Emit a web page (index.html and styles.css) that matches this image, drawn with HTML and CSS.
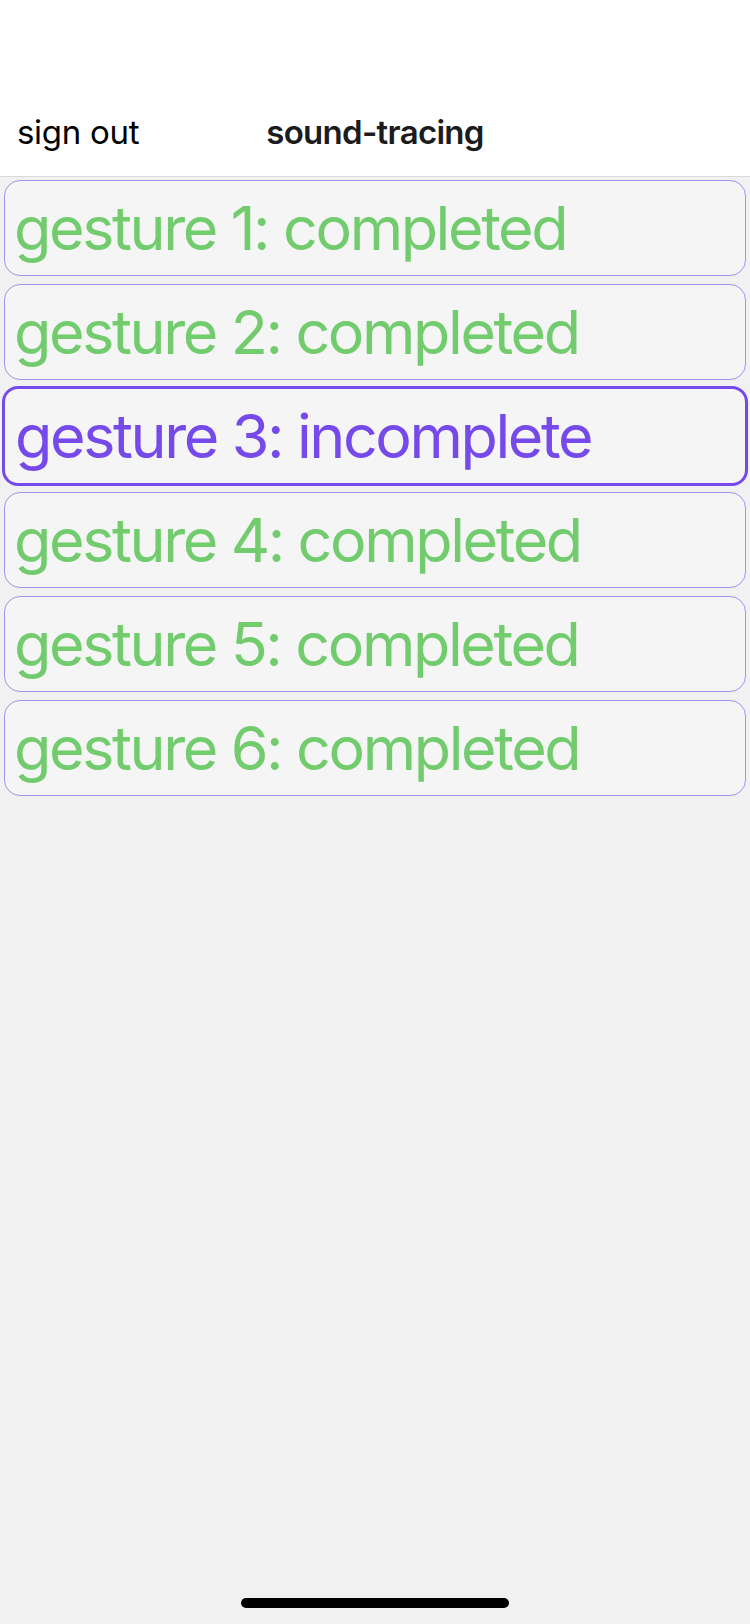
FILE: index.html
```html
<!DOCTYPE html>
<html>
<head>
<meta charset="utf-8">
<link rel="stylesheet" href="styles.css">
</head>
<body>
<div class="screen">
  <header class="topbar">
    <div class="status"></div>
    <nav class="nav">
      <span class="nav-left">sign out</span>
      <span class="nav-title">sound-tracing</span>
      <span class="nav-right"></span>
    </nav>
  </header>
  <main class="list">
    <div class="card done">gesture 1: completed</div>
    <div class="card done">gesture 2: completed</div>
    <div class="card active">gesture 3: incomplete</div>
    <div class="card done">gesture 4: completed</div>
    <div class="card done">gesture 5: completed</div>
    <div class="card done">gesture 6: completed</div>
  </main>
  <div class="home-bar"></div>
</div>
</body>
</html>
```
FILE: styles.css
```css
html, body {
  margin: 0;
  padding: 0;
}
body {
  background: #f1f1f2;
  font-family: Inter, "Noto Sans", sans-serif;
}
.screen {
  width: 750px;
  height: 1624px;
  display: flex;
  flex-direction: column;
  position: relative;
}
.topbar {
  background: #ffffff;
  border-bottom: 1px solid #d9d9d9;
}
.status {
  height: 88px;
}
.nav {
  height: 88px;
  display: grid;
  grid-template-columns: 1fr auto 1fr;
  align-items: center;
  font-size: 33px;
  color: #000;
}
.nav-left {
  padding-left: 17px;
  letter-spacing: -0.3px;
}
.nav-title {
  font-weight: 600;
  color: #1c1c1e;
  letter-spacing: -0.7px;
}
.list {
  display: flex;
  flex-direction: column;
  gap: 8px;
  padding: 3px 4px 0 4px;
}
.card {
  height: 96px;
  box-sizing: border-box;
  border: 1px solid #a88ff0;
  border-radius: 16px;
  background: #f5f5f6;
  display: flex;
  align-items: center;
  padding-left: 9px;
  font-size: 61px;
  letter-spacing: -2.4px;
}
.card.done {
  color: #72cc6e;
}
.card.active {
  color: #7549ea;
  border: 3px solid #7549ea;
  margin: -2px -2px;
  height: 100px;
  padding-left: 10px;
}
.home-bar {
  position: absolute;
  left: 241px;
  top: 1598px;
  width: 268px;
  height: 10px;
  border-radius: 5px;
  background: #000;
}
```
